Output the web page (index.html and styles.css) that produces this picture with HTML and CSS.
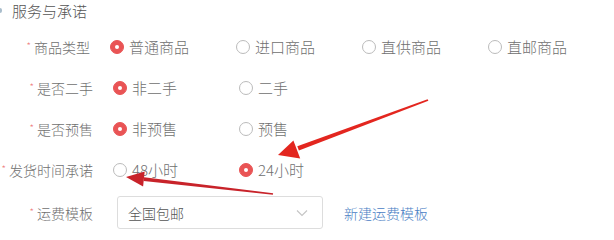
FILE: index.html
```html
<!DOCTYPE html>
<html lang="zh-CN">
<head>
    <meta charset="UTF-8">
    <title>服务与承诺</title>
    <link rel="stylesheet" href="styles.css">
</head>
<body>

<div class="panel">
    <div class="section-title"><span class="mark"></span>服务与承诺</div>

    <div class="form-row">
        <div class="label"><span class="req">*</span>商品类型</div>
        <div class="options">
            <span class="radio-item"><span class="radio checked"></span>普通商品</span>
            <span class="radio-item"><span class="radio"></span>进口商品</span>
            <span class="radio-item"><span class="radio"></span>直供商品</span>
            <span class="radio-item"><span class="radio"></span>直邮商品</span>
        </div>
    </div>

    <div class="form-row">
        <div class="label"><span class="req">*</span>是否二手</div>
        <div class="options">
            <span class="radio-item"><span class="radio checked"></span>非二手</span>
            <span class="radio-item"><span class="radio"></span>二手</span>
        </div>
    </div>

    <div class="form-row">
        <div class="label"><span class="req">*</span>是否预售</div>
        <div class="options">
            <span class="radio-item"><span class="radio checked"></span>非预售</span>
            <span class="radio-item"><span class="radio"></span>预售</span>
        </div>
    </div>

    <div class="form-row">
        <div class="label"><span class="req">*</span>发货时间承诺</div>
        <div class="options">
            <span class="radio-item"><span class="radio"></span>48小时</span>
            <span class="radio-item"><span class="radio checked"></span>24小时</span>
        </div>
    </div>

    <div class="form-row last">
        <div class="label"><span class="req">*</span>运费模板</div>
        <div class="select">
            <span>全国包邮</span>
            <svg class="chevron" width="12" height="8" viewBox="0 0 12 8"><path d="M1 1.5 L6 6.5 L11 1.5" fill="none" stroke="#c4c4c4" stroke-width="1.1"/></svg>
        </div>
        <a class="link" href="#">新建运费模板</a>
    </div>

    <!-- annotation arrows drawn over the form -->
    <svg class="arrows" width="614" height="240" viewBox="0 0 614 240">
        <polygon points="428.4,100.8 427.6,99.2 297.3,146.2 298.9,150.4" fill="#e3261f"/>
        <polygon points="278,155 293.4,140.6 300.2,158.4" fill="#e3261f"/>
        <polygon points="273.1,193.2 272.9,194.8 143.7,180.9 144.1,177.3" fill="#c8232a"/>
        <polygon points="126,177 144.7,171.6 143.1,186.5" fill="#c8232a"/>
    </svg>
</div>

</body>
</html>
```

FILE: styles.css
```css
body {
    margin: 0;
    background: #fff;
    font-family: "Noto Sans CJK SC", "Noto Sans", sans-serif;
    font-weight: 300;
    color: #777;
}

.panel {
    position: relative;
    width: 614px;
    height: 240px;
    overflow: hidden;
}

.section-title {
    height: 22px;
    line-height: 22px;
    padding-left: 12px;
    font-size: 15px;
    color: #555;
    position: relative;
}

.section-title .mark {
    position: absolute;
    left: -2px;
    top: 8px;
    width: 4px;
    height: 5px;
    border-radius: 2px;
    background: #a9bdcc;
}

.section-title + .form-row {
    margin-top: 4px;
}

.form-row {
    display: flex;
    align-items: center;
    height: 41px;
}

.label {
    width: 93px;
    text-align: right;
    font-size: 14px;
    color: #707070;
    white-space: nowrap;
}

.req {
    color: #ee7a7a;
    font-size: 10px;
    margin-right: 3px;
    vertical-align: 3px;
}

.options {
    display: flex;
    margin-left: 20px;
}

.radio-item {
    display: flex;
    align-items: center;
    width: 126px;
    font-size: 15px;
    color: #707070;
}

.radio {
    width: 12px;
    height: 12px;
    border: 1px solid #bbb;
    border-radius: 50%;
    margin-right: 5px;
    position: relative;
}

.radio.checked {
    border-color: #e95455;
    background: #e95455;
}

.radio.checked::after {
    content: "";
    position: absolute;
    left: 4px;
    top: 4px;
    width: 4px;
    height: 4px;
    border-radius: 50%;
    background: #fff;
}

.form-row.last {
    height: 45px;
}

.select {
    margin-left: 24px;
    width: 206px;
    height: 33px;
    border: 1px solid #ddd;
    border-radius: 3px;
    display: flex;
    align-items: center;
    justify-content: space-between;
    padding: 0 14px 0 10px;
    box-sizing: border-box;
    font-size: 14px;
    color: #555;
}

.link {
    margin-left: 21px;
    font-size: 14px;
    color: #4a80c4;
    text-decoration: none;
}

.arrows {
    position: absolute;
    left: 0;
    top: 0;
    pointer-events: none;
}
```
